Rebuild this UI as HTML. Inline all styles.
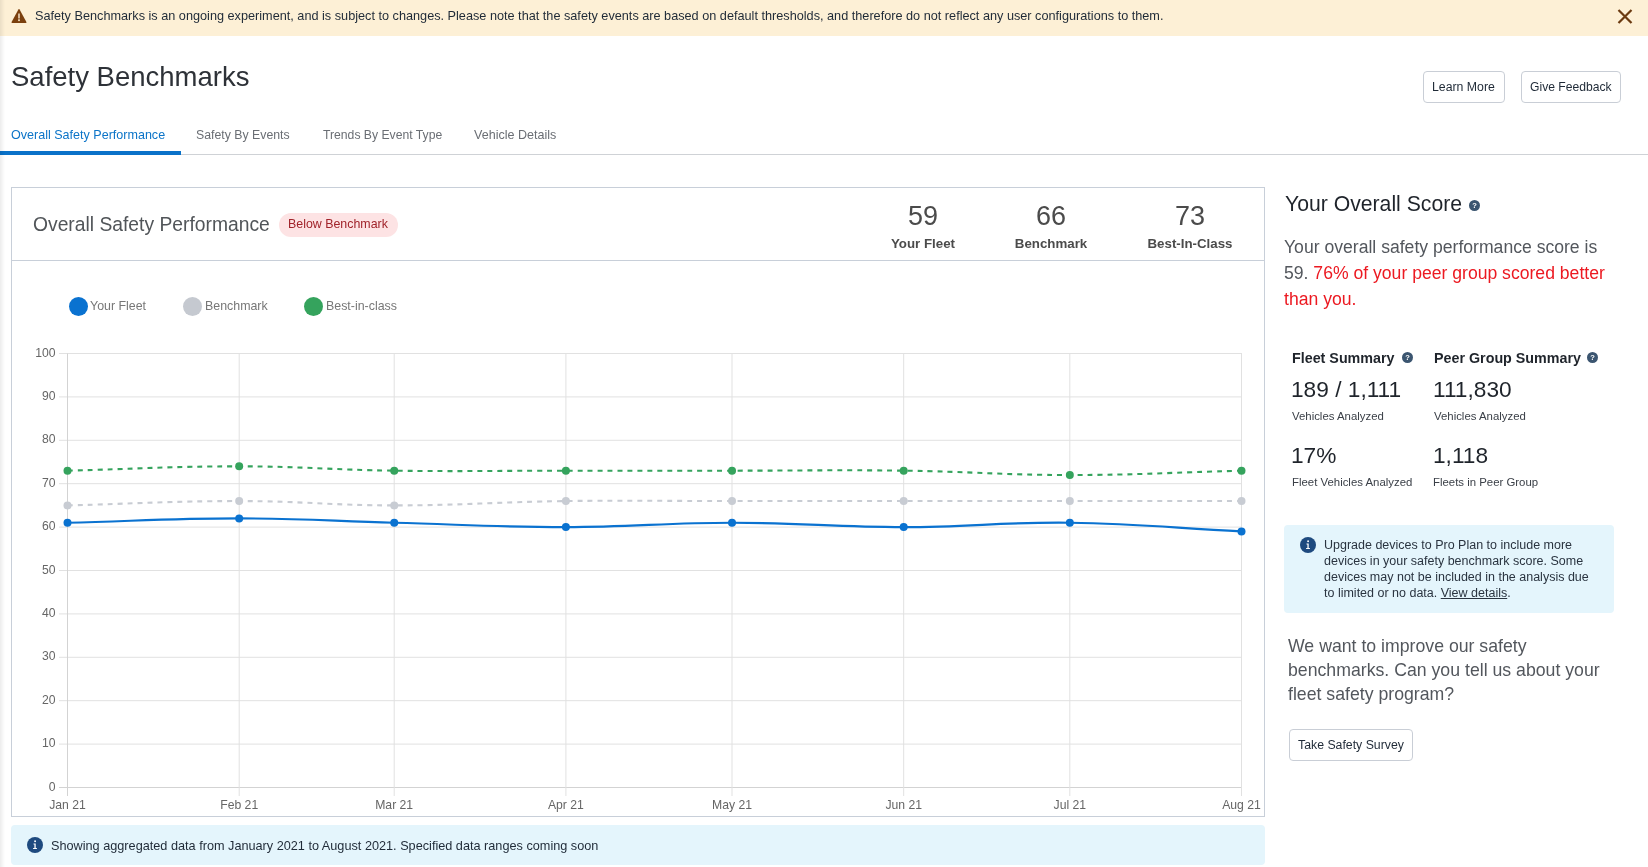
<!DOCTYPE html>
<html><head><meta charset="utf-8">
<style>
*{box-sizing:border-box;margin:0;padding:0}
html,body{width:1648px;height:867px;overflow:hidden;background:#fff;font-family:"Liberation Sans",sans-serif}
.t{position:absolute;line-height:1;white-space:nowrap;will-change:transform}
.shadow{position:absolute;left:0;top:0;width:5px;height:867px;background:linear-gradient(to right,rgba(0,0,0,.075),rgba(0,0,0,.02) 70%,rgba(0,0,0,0));z-index:5}
.banner{position:absolute;left:0;top:0;width:1648px;height:36px;background:#fdf0d6}
.btn{position:absolute;border:1px solid #c9ced6;border-radius:4px;background:#fff}
.card{position:absolute;left:11px;top:187px;width:1254px;height:630px;border:1px solid #c8cfd9}
.hdr{position:absolute;left:11px;top:260px;width:1254px;height:1px;background:#c8cfd9}
.badge{position:absolute;left:279px;top:213px;width:119px;height:24px;border-radius:12px;background:#fde3e4}
.dot{position:absolute;width:19px;height:19px;border-radius:50%}
.help{position:absolute;width:11px;height:11px;border-radius:50%;background:#3b5570;color:#fff;font:bold 7.5px/11px "Liberation Sans";text-align:center}
.info{position:absolute;border-radius:4px;background:#e4f5fc}
.icircle{position:absolute;width:16px;height:16px;border-radius:50%;background:#1e4a7f}
svg text.ax{font:12.2px "Liberation Sans";fill:#666}
svg .g{stroke:#e1e1e1;stroke-width:1}
svg .z{stroke:#d3d3d3;stroke-width:1}
</style></head><body>
<!-- banner -->
<div class="banner"></div>
<svg style="position:absolute;left:11px;top:8px" width="16" height="16" viewBox="0 0 16 16">
<path d="M8 0.9 Q8.3 0.9 8.6 1.4 L15.4 13.9 Q15.9 15 14.8 15 L1.2 15 Q0.1 15 0.6 13.9 L7.4 1.4 Q7.7 0.9 8 0.9 Z" fill="#7b400e"/>
<rect x="7.2" y="5.5" width="1.6" height="5" fill="#eed9bd"/>
<rect x="7.2" y="11.3" width="1.6" height="1.8" fill="#fdf0d6"/>
</svg>
<div class="t" style="left:35px;top:10.2px;font-size:12.7px;color:#1f2a37">Safety Benchmarks is an ongoing experiment, and is subject to changes. Please note that the safety events are based on default thresholds, and therefore do not reflect any user configurations to them.</div>
<svg style="position:absolute;left:1617px;top:9px" width="16" height="15" viewBox="0 0 16 15">
<path d="M1.5 1 L14.5 14 M14.5 1 L1.5 14" stroke="#6b3a10" stroke-width="2.2"/>
</svg>

<!-- title -->
<div class="t" style="left:11px;top:62.6px;font-size:27.5px;color:#2e3238">Safety Benchmarks</div>
<div class="btn" style="left:1423px;top:71px;width:82px;height:32px"></div>
<div class="t" style="left:1432px;top:80.7px;font-size:12.3px;color:#1f2a37">Learn More</div>
<div class="btn" style="left:1521px;top:71px;width:100px;height:32px"></div>
<div class="t" style="left:1530px;top:80.7px;font-size:12.15px;color:#1f2a37">Give Feedback</div>

<!-- tabs -->
<div class="t" style="left:11px;top:128.5px;font-size:12.55px;color:#0b74c8">Overall Safety Performance</div>
<div class="t" style="left:196px;top:128.5px;font-size:12.3px;color:#6a6e74">Safety By Events</div>
<div class="t" style="left:322.5px;top:128.5px;font-size:12.2px;color:#6a6e74">Trends By Event Type</div>
<div class="t" style="left:474px;top:128.5px;font-size:12.55px;color:#6a6e74">Vehicle Details</div>
<div style="position:absolute;left:0;top:154px;width:1648px;height:1px;background:#cfd2d6"></div>
<div style="position:absolute;left:0;top:151px;width:181px;height:4px;background:#0a72c9"></div>

<!-- card -->
<div class="card"></div>
<div class="hdr"></div>
<div class="t" style="left:33px;top:214.6px;font-size:19.3px;color:#515559">Overall Safety Performance</div>
<div class="badge"></div>
<div class="t" style="left:288px;top:218.4px;font-size:12.4px;color:#a1242b">Below Benchmark</div>

<div class="t" style="left:870px;top:202.6px;width:106px;text-align:center;font-size:27px;color:#4b4b4b">59</div>
<div class="t" style="left:870px;top:236.7px;width:106px;text-align:center;font-size:13.3px;font-weight:bold;color:#4b4b4b">Your Fleet</div>
<div class="t" style="left:998px;top:202.6px;width:106px;text-align:center;font-size:27px;color:#4b4b4b">66</div>
<div class="t" style="left:998px;top:236.7px;width:106px;text-align:center;font-size:13.3px;font-weight:bold;color:#4b4b4b">Benchmark</div>
<div class="t" style="left:1137px;top:202.6px;width:106px;text-align:center;font-size:27px;color:#4b4b4b">73</div>
<div class="t" style="left:1137px;top:236.7px;width:106px;text-align:center;font-size:13.3px;font-weight:bold;color:#4b4b4b">Best-In-Class</div>

<!-- legend -->
<div class="dot" style="left:68.5px;top:297px;background:#0a72d0"></div>
<div class="t" style="left:90px;top:299.5px;font-size:12.4px;color:#777">Your Fleet</div>
<div class="dot" style="left:183px;top:297px;background:#c5c9d0"></div>
<div class="t" style="left:205px;top:299.5px;font-size:12.4px;color:#777">Benchmark</div>
<div class="dot" style="left:304px;top:297px;background:#35a35d"></div>
<div class="t" style="left:326px;top:299.5px;font-size:12.4px;color:#777">Best-in-class</div>

<svg style="position:absolute;left:0;top:0" width="1648" height="867">
<line x1="59" y1="787.5" x2="1242.0" y2="787.5" class="z"/>
<text x="55.5" y="790.5" text-anchor="end" class="ax">0</text>
<line x1="59" y1="744.1" x2="1242.0" y2="744.1" class="g"/>
<text x="55.5" y="747.1" text-anchor="end" class="ax">10</text>
<line x1="59" y1="700.7" x2="1242.0" y2="700.7" class="g"/>
<text x="55.5" y="703.7" text-anchor="end" class="ax">20</text>
<line x1="59" y1="657.3" x2="1242.0" y2="657.3" class="g"/>
<text x="55.5" y="660.3" text-anchor="end" class="ax">30</text>
<line x1="59" y1="613.9" x2="1242.0" y2="613.9" class="g"/>
<text x="55.5" y="616.9" text-anchor="end" class="ax">40</text>
<line x1="59" y1="570.5" x2="1242.0" y2="570.5" class="g"/>
<text x="55.5" y="573.5" text-anchor="end" class="ax">50</text>
<line x1="59" y1="527.1" x2="1242.0" y2="527.1" class="g"/>
<text x="55.5" y="530.1" text-anchor="end" class="ax">60</text>
<line x1="59" y1="483.7" x2="1242.0" y2="483.7" class="g"/>
<text x="55.5" y="486.7" text-anchor="end" class="ax">70</text>
<line x1="59" y1="440.3" x2="1242.0" y2="440.3" class="g"/>
<text x="55.5" y="443.3" text-anchor="end" class="ax">80</text>
<line x1="59" y1="396.9" x2="1242.0" y2="396.9" class="g"/>
<text x="55.5" y="399.9" text-anchor="end" class="ax">90</text>
<line x1="59" y1="353.5" x2="1242.0" y2="353.5" class="g"/>
<text x="55.5" y="356.5" text-anchor="end" class="ax">100</text>
<line x1="67.5" y1="353.5" x2="67.5" y2="796" class="z"/>
<text x="67.5" y="809" text-anchor="middle" class="ax">Jan 21</text>
<line x1="239.2" y1="353.5" x2="239.2" y2="796" class="g"/>
<text x="239.2" y="809" text-anchor="middle" class="ax">Feb 21</text>
<line x1="394.2" y1="353.5" x2="394.2" y2="796" class="g"/>
<text x="394.2" y="809" text-anchor="middle" class="ax">Mar 21</text>
<line x1="565.9" y1="353.5" x2="565.9" y2="796" class="g"/>
<text x="565.9" y="809" text-anchor="middle" class="ax">Apr 21</text>
<line x1="732.0" y1="353.5" x2="732.0" y2="796" class="g"/>
<text x="732.0" y="809" text-anchor="middle" class="ax">May 21</text>
<line x1="903.7" y1="353.5" x2="903.7" y2="796" class="g"/>
<text x="903.7" y="809" text-anchor="middle" class="ax">Jun 21</text>
<line x1="1069.8" y1="353.5" x2="1069.8" y2="796" class="g"/>
<text x="1069.8" y="809" text-anchor="middle" class="ax">Jul 21</text>
<line x1="1241.5" y1="353.5" x2="1241.5" y2="796" class="g"/>
<text x="1241.5" y="809" text-anchor="middle" class="ax">Aug 21</text>
<path d="M67.50,505.40 C136.17,503.66 170.50,501.06 239.17,501.06 C301.19,501.06 332.20,505.40 394.23,505.40 C462.89,505.40 497.22,501.94 565.90,501.06 C632.34,500.21 665.58,501.06 732.03,501.06 C800.70,501.06 835.03,501.06 903.70,501.06 C970.15,501.06 1003.38,501.06 1069.83,501.06 C1138.50,501.06 1172.83,501.06 1241.50,501.06" fill="none" stroke="#c8ccd3" stroke-width="2.1" stroke-dasharray="5 5"/>
<circle cx="67.50" cy="505.40" r="4" fill="#c8ccd3"/>
<circle cx="239.17" cy="501.06" r="4" fill="#c8ccd3"/>
<circle cx="394.23" cy="505.40" r="4" fill="#c8ccd3"/>
<circle cx="565.90" cy="501.06" r="4" fill="#c8ccd3"/>
<circle cx="732.03" cy="501.06" r="4" fill="#c8ccd3"/>
<circle cx="903.70" cy="501.06" r="4" fill="#c8ccd3"/>
<circle cx="1069.83" cy="501.06" r="4" fill="#c8ccd3"/>
<circle cx="1241.50" cy="501.06" r="4" fill="#c8ccd3"/>
<path d="M67.50,470.68 C136.17,468.94 170.50,466.34 239.17,466.34 C301.19,466.34 332.19,469.86 394.23,470.68 C462.88,471.59 497.23,470.68 565.90,470.68 C632.35,470.68 665.58,470.68 732.03,470.68 C800.70,470.68 835.04,469.80 903.70,470.68 C970.16,471.53 1003.38,475.02 1069.83,475.02 C1138.50,475.02 1172.83,472.42 1241.50,470.68" fill="none" stroke="#35a35d" stroke-width="2.1" stroke-dasharray="5 5"/>
<circle cx="67.50" cy="470.68" r="4" fill="#35a35d"/>
<circle cx="239.17" cy="466.34" r="4" fill="#35a35d"/>
<circle cx="394.23" cy="470.68" r="4" fill="#35a35d"/>
<circle cx="565.90" cy="470.68" r="4" fill="#35a35d"/>
<circle cx="732.03" cy="470.68" r="4" fill="#35a35d"/>
<circle cx="903.70" cy="470.68" r="4" fill="#35a35d"/>
<circle cx="1069.83" cy="475.02" r="4" fill="#35a35d"/>
<circle cx="1241.50" cy="470.68" r="4" fill="#35a35d"/>
<path d="M67.50,522.76 C136.17,521.02 170.50,518.42 239.17,518.42 C301.19,518.42 332.20,521.11 394.23,522.76 C462.89,524.58 497.23,527.10 565.90,527.10 C632.35,527.10 665.57,522.76 732.03,522.76 C800.70,522.76 835.03,527.10 903.70,527.10 C970.15,527.10 1003.41,521.91 1069.83,522.76 C1138.53,523.64 1172.83,527.97 1241.50,531.44" fill="none" stroke="#0a72d0" stroke-width="2.2"/>
<circle cx="67.50" cy="522.76" r="4" fill="#0a72d0"/>
<circle cx="239.17" cy="518.42" r="4" fill="#0a72d0"/>
<circle cx="394.23" cy="522.76" r="4" fill="#0a72d0"/>
<circle cx="565.90" cy="527.10" r="4" fill="#0a72d0"/>
<circle cx="732.03" cy="522.76" r="4" fill="#0a72d0"/>
<circle cx="903.70" cy="527.10" r="4" fill="#0a72d0"/>
<circle cx="1069.83" cy="522.76" r="4" fill="#0a72d0"/>
<circle cx="1241.50" cy="531.44" r="4" fill="#0a72d0"/>
</svg>

<!-- bottom info -->
<div class="info" style="left:11px;top:825px;width:1254px;height:40px"></div>
<svg style="position:absolute;left:27px;top:837px" width="16" height="16" viewBox="0 0 16 16"><circle cx="8" cy="8" r="8" fill="#1e4a7f"/><circle cx="8.1" cy="4.3" r="0.95" fill="#fff"/><path d="M6.5 6.6 H8.7 V11.0 H9.9 V11.9 H6.1 V11.0 H7.4 V7.5 H6.5 Z" fill="#fff"/></svg>
<div class="t" style="left:51px;top:839.8px;font-size:12.7px;color:#1f2a37">Showing aggregated data from January 2021 to August 2021. Specified data ranges coming soon</div>

<!-- right panel -->
<div class="t" style="left:1285px;top:193px;font-size:21.2px;color:#1f242b">Your Overall Score</div>
<div class="help" style="left:1469px;top:199.5px">?</div>
<div class="t" style="left:1284px;top:234px;font-size:17.6px;line-height:26px;white-space:normal;width:340px;color:#53575d">Your overall safety performance score is<br>59. <span style="color:#ec1921">76% of your peer group scored better<br>than you.</span></div>

<div class="t" style="left:1292px;top:351px;font-size:14.3px;font-weight:bold;color:#1f242b">Fleet Summary</div>
<div class="help" style="left:1402px;top:352px">?</div>
<div class="t" style="left:1434px;top:351px;font-size:14.3px;font-weight:bold;color:#1f242b">Peer Group Summary</div>
<div class="help" style="left:1587px;top:352px">?</div>

<div class="t" style="left:1291px;top:378px;font-size:22.7px;color:#1f242b">189 / 1,111</div>
<div class="t" style="left:1292px;top:411px;font-size:11.4px;color:#3b4048">Vehicles Analyzed</div>
<div class="t" style="left:1291px;top:444px;font-size:22.7px;color:#1f242b">17%</div>
<div class="t" style="left:1292px;top:476.7px;font-size:11.4px;color:#3b4048">Fleet Vehicles Analyzed</div>

<div class="t" style="left:1433px;top:378px;font-size:22.7px;color:#1f242b">111,830</div>
<div class="t" style="left:1434px;top:411px;font-size:11.4px;color:#3b4048">Vehicles Analyzed</div>
<div class="t" style="left:1433px;top:444px;font-size:22.7px;color:#1f242b">1,118</div>
<div class="t" style="left:1433px;top:476.7px;font-size:11.4px;color:#3b4048">Fleets in Peer Group</div>

<div class="info" style="left:1284px;top:525px;width:330px;height:88px"></div>
<svg style="position:absolute;left:1300px;top:537px" width="16" height="16" viewBox="0 0 16 16"><circle cx="8" cy="8" r="8" fill="#1e4a7f"/><circle cx="8.1" cy="4.3" r="0.95" fill="#fff"/><path d="M6.5 6.6 H8.7 V11.0 H9.9 V11.9 H6.1 V11.0 H7.4 V7.5 H6.5 Z" fill="#fff"/></svg>
<div class="t" style="left:1324px;top:536.7px;font-size:12.5px;line-height:16px;color:#2a3440">Upgrade devices to Pro Plan to include more<br>devices in your safety benchmark score. Some<br>devices may not be included in the analysis due<br>to limited or no data. <span style="text-decoration:underline">View details</span>.</div>

<div class="t" style="left:1288px;top:633.5px;font-size:17.7px;line-height:24px;color:#53575d">We want to improve our safety<br>benchmarks. Can you tell us about your<br>fleet safety program?</div>
<div class="btn" style="left:1289px;top:729px;width:124px;height:32px"></div>
<div class="t" style="left:1298px;top:738.5px;font-size:12.3px;color:#1f2a37">Take Safety Survey</div>
<div class="shadow"></div>
</body></html>
